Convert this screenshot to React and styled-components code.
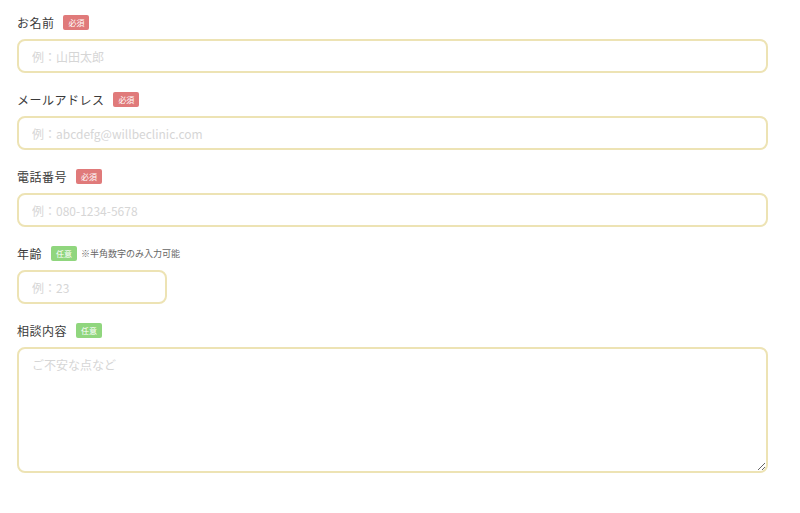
import React from "react"
import styled, { createGlobalStyle } from "styled-components"

const GlobalStyle = createGlobalStyle`
    body {
        margin: 0;
        background: #fff;
        font-family: "Noto Sans CJK JP", "Noto Sans", sans-serif;
    }
`

const Form = styled.form`
    display: flex;
    flex-direction: column;
    gap: 16px;
    padding: 12px 32px 0 17px;
`

const Field = styled.div`
    display: flex;
    flex-direction: column;
    gap: 7px;
`

const LabelRow = styled.div`
    display: flex;
    align-items: center;
    height: 20px;
`

const Label = styled.label`
    font-size: 12px;
    color: #3a3a3a;
    letter-spacing: 0.04em;
    margin-right: 9px;
`

const Badge = styled.span`
    display: inline-flex;
    align-items: center;
    justify-content: center;
    width: 26px;
    height: 15px;
    border-radius: 2px;
    font-size: 8px;
    color: #fff;
    background: ${props => props.$required ? "#e07a7a" : "#90d67e"};
`

const Note = styled.span`
    font-size: 9px;
    color: #666;
    margin-left: 4px;
`

const Input = styled.input`
    box-sizing: border-box;
    width: ${props => props.$width || "100%"};
    height: 34px;
    border: 2px solid #ede3b4;
    border-radius: 8px;
    padding: 0 13px;
    font-family: inherit;
    font-size: 12px;
    color: #333;
    outline: none;
    &::placeholder {
        color: #d6d6d6;
    }
`

const TextArea = styled.textarea`
    box-sizing: border-box;
    width: 100%;
    height: 126px;
    border: 2px solid #ede3b4;
    border-radius: 8px;
    padding: 7px 13px;
    font-family: inherit;
    font-size: 12px;
    color: #333;
    outline: none;
    display: block;
    &::placeholder {
        color: #d6d6d6;
    }
`

function App(){
    return(
        <>
        <GlobalStyle />
        <Form>
            <Field>
                <LabelRow><Label>お名前</Label><Badge $required>必須</Badge></LabelRow>
                <Input placeholder="例：山田太郎" />
            </Field>
            <Field>
                <LabelRow><Label>メールアドレス</Label><Badge $required>必須</Badge></LabelRow>
                <Input placeholder="例：abcdefg@willbeclinic.com" />
            </Field>
            <Field>
                <LabelRow><Label>電話番号</Label><Badge $required>必須</Badge></LabelRow>
                <Input placeholder="例：080-1234-5678" />
            </Field>
            <Field>
                <LabelRow><Label>年齢</Label><Badge>任意</Badge><Note>※半角数字のみ入力可能</Note></LabelRow>
                <Input $width="150px" placeholder="例：23" />
            </Field>
            <Field>
                <LabelRow><Label>相談内容</Label><Badge>任意</Badge></LabelRow>
                <TextArea placeholder="ご不安な点など" />
            </Field>
        </Form>
        </>
    )
}

export default App
